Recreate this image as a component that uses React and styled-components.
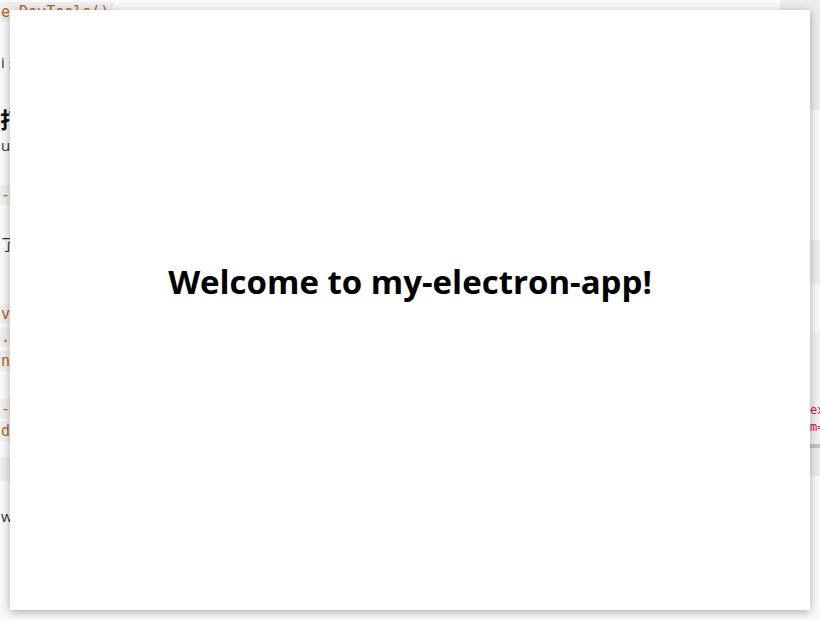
import React from 'react';
import styled, { createGlobalStyle } from 'styled-components';

const GlobalStyle = createGlobalStyle`
    html, body {
        margin: 0;
        padding: 0;
        width: 820px;
        height: 620px;
        overflow: hidden;
        background: #ffffff;
    }
    body {
        font-family: 'Open Sans', 'Noto Sans CJK SC', sans-serif;
    }
`

const Desktop = styled.div`
    position: relative;
    width: 820px;
    height: 620px;
    overflow: hidden;
    display: flex;
    justify-content: space-between;
    background: #fafafa;
`

const DocColumn = styled.div`
    width: 240px;
    display: flex;
    flex-direction: column;
    align-items: flex-start;
    white-space: nowrap;
    overflow: hidden;
`

const SideColumn = styled.div`
    width: 40px;
    display: flex;
    flex-direction: column;
    white-space: nowrap;
    overflow: hidden;
`

const Line = styled.div`
    height: ${p => p.h || 20}px;
    margin-top: ${p => p.gap || 0}px;
    line-height: ${p => p.h || 20}px;
    font-size: 15px;
    color: ${p => (p.code ? '#b5651d' : '#333333')};
    background: ${p => (p.code ? '#efefef' : 'transparent')};
    font-family: ${p => (p.code ? "'DejaVu Sans Mono', monospace" : "'Open Sans', 'Noto Sans CJK SC', sans-serif")};
    padding: 0 4px 0 1px;
`

const Heading = styled.div`
    height: 26px;
    margin-top: ${p => p.gap || 0}px;
    line-height: 26px;
    font-size: 22px;
    font-weight: 700;
    color: #111111;
    font-family: 'Noto Sans CJK SC', sans-serif;
`

const Band = styled.div`
    align-self: stretch;
    height: ${p => p.h}px;
    margin-top: ${p => p.gap || 0}px;
    background: ${p => p.tone || '#eeeeee'};
`

const CodeBlock = styled.div`
    margin-top: ${p => p.gap || 0}px;
    background: #f2f2f2;
    display: flex;
    flex-direction: column;
    padding-top: 70px;
`

const RedCode = styled.div`
    height: 17px;
    line-height: 17px;
    font-family: 'DejaVu Sans Mono', monospace;
    font-size: 12px;
    color: #d6124a;
    padding-left: 30px;
`

const Scrollbar = styled.div`
    margin-top: 8px;
    height: 4px;
    background: #c4c4c4;
`

const Window = styled.main`
    position: absolute;
    top: 10px;
    left: 10px;
    width: 800px;
    height: 600px;
    background: #ffffff;
    box-shadow: 0 2px 9px rgba(0, 0, 0, 0.32);
    display: flex;
    flex-direction: column;
    align-items: center;
    padding-top: 250px;
    box-sizing: border-box;
`

const Title = styled.h1`
    margin: 0;
    font-family: 'Open Sans', sans-serif;
    font-weight: 700;
    font-size: 33px;
    line-height: 44px;
    color: #000000;
`

export default function App() {
    return (
        <>
            <GlobalStyle />
            <Desktop>
                <DocColumn>
                    <Line code h={20} gap={2}>e DevTools()</Line>
                    <Line gap={30}>i 来</Line>
                    <Heading gap={33}>打</Heading>
                    <Line gap={4}>ue</Line>
                    <Line code gap={30}>-p</Line>
                    <Line gap={29}>了在</Line>
                    <Line code gap={50}>v'</Line>
                    <Line code gap={3}>. '</Line>
                    <Line code gap={4}>nt</Line>
                    <Line code gap={28}>-p</Line>
                    <Line code gap={2}>de</Line>
                    <Band h={24} gap={16} />
                    <Line gap={25}>w</Line>
                </DocColumn>
                <SideColumn>
                    <Band h={110} tone="#ececec" />
                    <Band h={44} gap={130} />
                    <CodeBlock gap={48}>
                        <RedCode>ex</RedCode>
                        <RedCode>m=</RedCode>
                        <Scrollbar />
                        <Band h={28} tone="#ececec" />
                    </CodeBlock>
                </SideColumn>
                <Window>
                    <Title>Welcome to my-electron-app!</Title>
                </Window>
            </Desktop>
        </>
    );
}
